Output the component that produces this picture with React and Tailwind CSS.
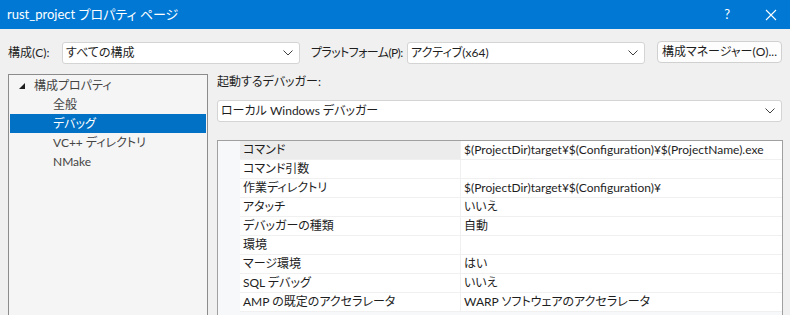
import React from "react";

const FONT = {
  fontFamily: 'Lato, "Noto Sans CJK JP", sans-serif',
};

function Chevron() {
  return (
    <svg width="10" height="6" viewBox="0 0 10 6" className="shrink-0">
      <path d="M0.5 0.5 L5 5 L9.5 0.5" fill="none" stroke="#404040" strokeWidth="1" />
    </svg>
  );
}

function Dropdown({ text, className }) {
  return (
    <div
      className={`flex h-[22px] items-center justify-between rounded-[3px] border border-[#d4d4d4] bg-white pl-[3px] pr-[6px] ${className}`}
    >
      <span className="whitespace-nowrap text-[12px] leading-none text-[#1e1e1e]">{text}</span>
      <Chevron />
    </div>
  );
}

const rows = [
  ["コマンド", "$(ProjectDir)target¥$(Configuration)¥$(ProjectName).exe"],
  ["コマンド引数", ""],
  ["作業ディレクトリ", "$(ProjectDir)target¥$(Configuration)¥"],
  ["アタッチ", "いいえ"],
  ["デバッガーの種類", "自動"],
  ["環境", ""],
  ["マージ環境", "はい"],
  ["SQL デバッグ", "いいえ"],
  ["AMP の既定のアクセラレータ", "WARP ソフトウェアのアクセラレータ"],
];

export default function App() {
  return (
    <div
      className="h-[315px] w-[790px] overflow-hidden whitespace-nowrap bg-[#f0f0f0] [font-feature-settings:'palt']"
      style={FONT}
    >
      {/* Title bar */}
      <div className="flex h-[29px] items-center justify-between bg-[#0078d4] pl-[7px] text-white">
        <span className="text-[13px] leading-none">rust_project プロパティ ページ</span>
        <div className="flex items-center">
          <span className="mr-[35px] text-[13px] leading-none">?</span>
          <svg width="12" height="12" viewBox="0 0 12 12" className="mr-[13px]">
            <path d="M1 1 L11 11 M11 1 L1 11" stroke="white" strokeWidth="1.1" />
          </svg>
        </div>
      </div>

      {/* Config row */}
      <div className="mt-[13px] flex items-center pl-[8px] text-[12px] text-[#1e1e1e]">
        <span className="w-[54px] shrink-0 leading-none">構成(C):</span>
        <Dropdown text="すべての構成" className="w-[238px] shrink-0" />
        <span className="ml-[11px] w-[96px] shrink-0 leading-none tracking-[-0.6px]">プラットフォーム(P):</span>
        <Dropdown text="アクティブ(x64)" className="w-[238px] shrink-0" />
        <button className="ml-[12px] flex h-[22px] w-[125px] shrink-0 -translate-y-[1px] items-center justify-center rounded-[4px] border border-[#d0d0d0] bg-[#fdfdfd] text-[12px] leading-none text-[#1e1e1e]">
          構成マネージャー(O)...
        </button>
      </div>

      {/* Main */}
      <div className="mt-[10px] flex pl-[8px]">
        {/* Tree */}
        <div className="h-[260px] w-[200px] shrink-0 border border-[#8c8c8c] bg-[#f5f5f5] p-px text-[12px] text-[#444444]">
          <div className="flex h-[19px] items-center">
            <svg width="6" height="6" viewBox="0 0 6 6" className="ml-[9px] mr-[9px]">
              <polygon points="6,0 6,6 0,6" fill="#1e1e1e" />
            </svg>
            <span className="leading-none">構成プロパティ</span>
          </div>
          <div className="flex h-[19px] items-center pl-[43px] leading-none">全般</div>
          <div className="flex h-[19px] items-center bg-[#0071c5] pl-[43px] leading-none text-white">デバッグ</div>
          <div className="flex h-[19px] items-center pl-[43px] leading-none">VC++ ディレクトリ</div>
          <div className="flex h-[19px] items-center pl-[43px] leading-none">NMake</div>
        </div>

        {/* Right side */}
        <div className="ml-[9px] w-[566px] shrink-0">
          <div className="flex h-[16px] items-center text-[12px] leading-none text-[#1e1e1e]">起動するデバッガー:</div>
          <Dropdown text="ローカル Windows デバッガー" className="mt-[10px] w-[565px]" />
          <div className="mt-[18px] h-[200px] overflow-hidden border border-[#a0a0a0] bg-[#f7f8fa] text-[12px] text-[#1e1e1e]">
            {rows.map(([name, value], i) => (
              <div key={name} className="flex h-[19px]">
                <div className="w-[22px] shrink-0" />
                <div
                  className={`flex w-[221px] shrink-0 items-center border-b border-r border-[#f0f0f0] pl-[3px] leading-none ${
                    i === 0 ? "bg-[#ececec]" : "bg-white"
                  }`}
                >
                  {name}
                </div>
                <div className="flex min-w-0 flex-1 items-center overflow-hidden border-b border-[#f0f0f0] bg-white pl-[3px] leading-none">
                  {value}
                </div>
              </div>
            ))}
          </div>
        </div>
      </div>
    </div>
  );
}
